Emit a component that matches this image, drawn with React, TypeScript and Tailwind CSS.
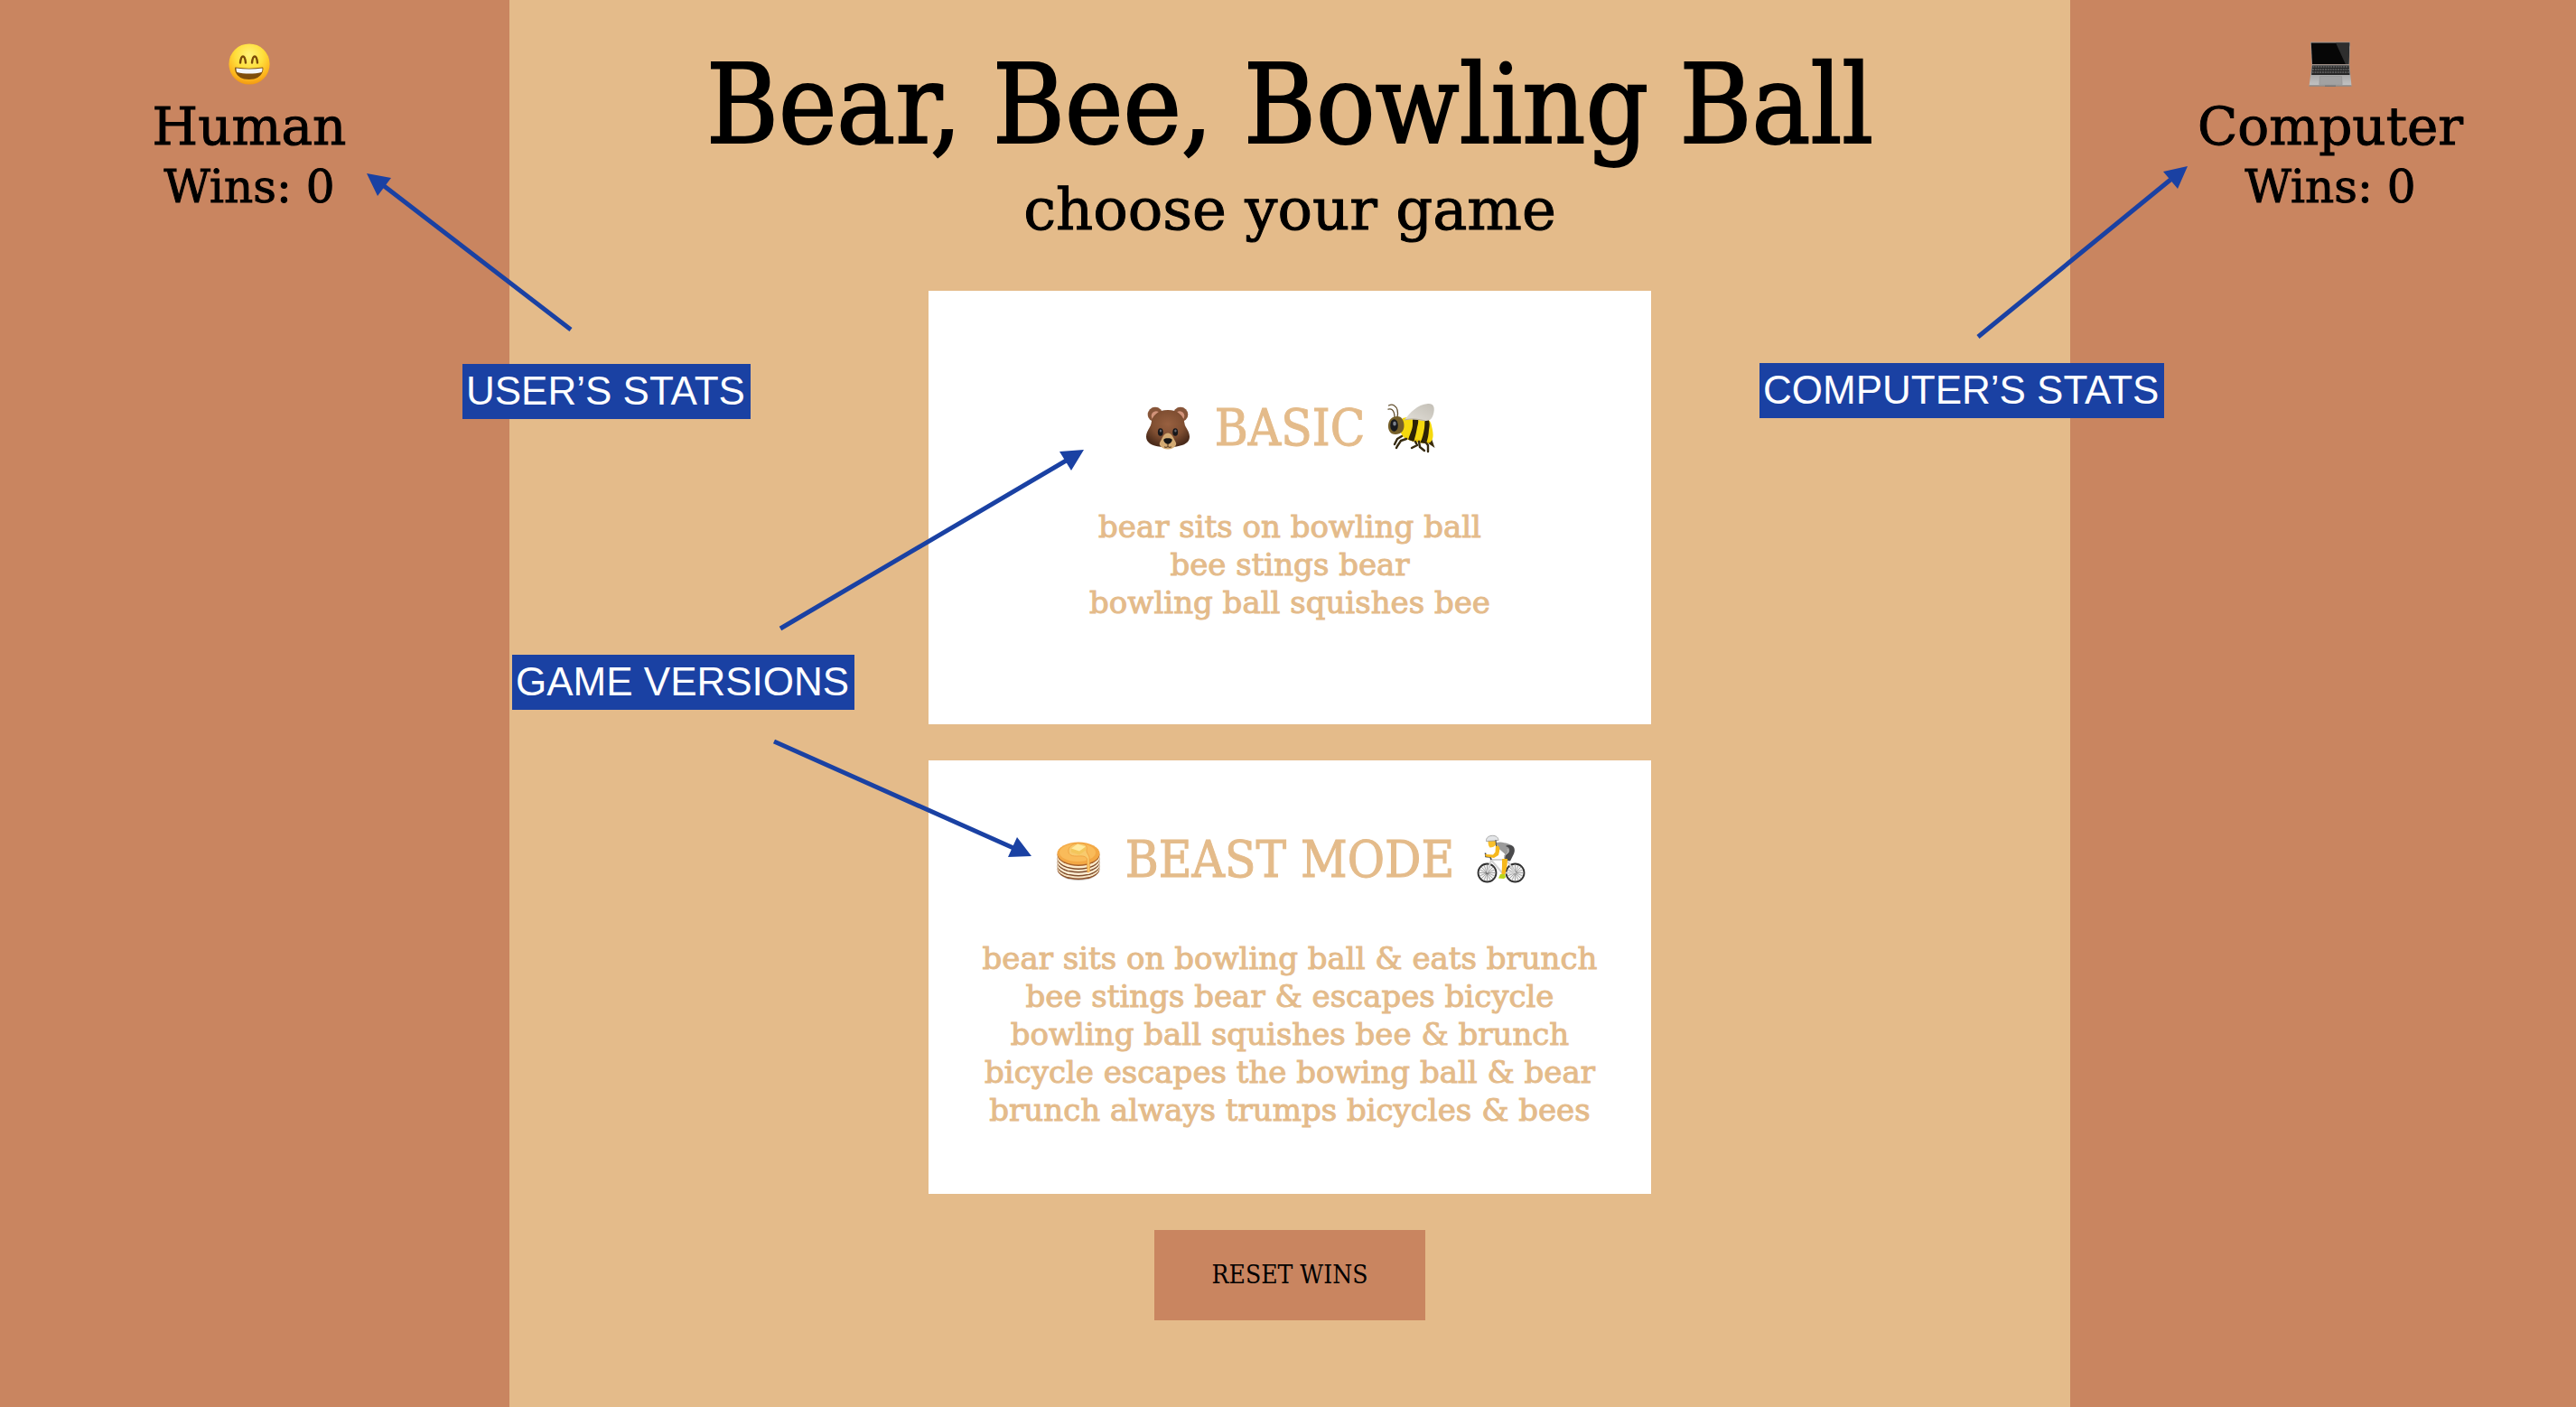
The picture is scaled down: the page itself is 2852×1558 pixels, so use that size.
import type { ReactNode } from "react";

const SLAB = "font-['DejaVu_Serif_Condensed','DejaVu_Serif',serif]";
const SLAB_WIDE = "font-['DejaVu_Serif',serif]";

function Grin() {
  return (
    <svg viewBox="0 0 48 48" className="size-12" aria-label="grinning face" role="img">
      <defs>
        <radialGradient id="face" cx="50%" cy="28%" r="75%">
          <stop offset="0" stopColor="#fff27a" />
          <stop offset=".45" stopColor="#ffdf3c" />
          <stop offset=".8" stopColor="#fdb41d" />
          <stop offset="1" stopColor="#ee9210" />
        </radialGradient>
      </defs>
      <circle cx="24" cy="24" r="22.6" fill="url(#face)" />
      <path d="M14 22.500c.6-5.500 1.800-7 3-7s2.400 1.500 3 7M27 22.500c.6-5.500 1.800-7 3-7s2.400 1.500 3 7" fill="none" stroke="#7a4a08" strokeWidth="2.400" strokeLinecap="round" />
      <path d="M8.500 27.500c10 1.500 20.500 1.500 30.500 0 1 0 1.200 13.500-15.200 13.500S7.500 27.500 8.500 27.500z" fill="#7d4d0c" />
      <path d="M9.500 28.500c9.500 1.400 19.500 1.400 29 0 0 2 0 3.200-1 4.500-8 2-19 2-27 0-.8-1.300-1-2.500-1-4.500z" fill="#f3f6fb" />
    </svg>
  );
}

function Laptop() {
  return (
    <svg viewBox="0 0 48 50" className="h-[50px] w-12" aria-label="laptop" role="img">
      <defs>
        <linearGradient id="deck" x1="0" y1="0" x2="0" y2="1">
          <stop offset="0" stopColor="#8f8f8f" />
          <stop offset="1" stopColor="#c4c4c4" />
        </linearGradient>
      </defs>
      <path d="M2 .5h44l-.8 25H3.500z" fill="#969696" />
      <path d="M2.800 1.500h42.400l-.9 23.500H4z" fill="#060606" />
      <path d="M30 1.500h15.200L44.300 25h-3.500z" fill="#2e2e2e" />
      <path d="M3.500 25.500h41.700L47.500 49.500H.5z" fill="url(#deck)" />
      <path d="M4 26.500h40.700l.8 10.500H3.100z" fill="#262626" />
      <path d="M4.500 28h40M4 31h41M3.700 34h41.800" stroke="#858585" strokeWidth="1.200" strokeDasharray="2 .8" />
      <path d="M12.500 38.500h24l.7 9h-25.400z" fill="#a2a2a2" stroke="#8d8d8d" strokeWidth=".5" />
      <path d="M.5 49h47" stroke="#6f6a66" strokeWidth="1" />
      <path d="M18 48.500h12v1.500H18z" fill="#777" />
    </svg>
  );
}

function Bear() {
  return (
    <svg viewBox="0 0 56 56" className="size-14" aria-label="bear" role="img">
      <defs>
        <radialGradient id="fur" cx="50%" cy="38%" r="62%">
          <stop offset="0" stopColor="#986040" />
          <stop offset=".6" stopColor="#7f4e31" />
          <stop offset="1" stopColor="#4b2b1a" />
        </radialGradient>
      </defs>
      <circle cx="14" cy="13" r="8.300" fill="#875539" />
      <circle cx="42" cy="13" r="8.300" fill="#875539" />
      <circle cx="15" cy="14.500" r="5.300" fill="#d2937a" />
      <circle cx="41" cy="14.500" r="5.300" fill="#d2937a" />
      <path d="M28 8c11 0 17.500 6 18.500 15 .5 4.500 5.500 8 5.500 14.500C52 46 42 49 28 49S4 46 4 37.500C4 31 9 27.500 9.500 23 10.500 14 17 8 28 8z" fill="url(#fur)" />
      <path d="M28 33.500c4 0 5.500 4 7 7 2 3.500 3 5 1.500 7-1.700 2.500-5 4-8.500 4s-6.800-1.500-8.500-4c-1.500-2-.5-3.500 1.500-7 1.500-3 3-7 7-7z" fill="#d3aa72" />
      <path d="M23.500 40.500c1-1.700 8-1.700 9 0 1 2-2.500 5.300-4.500 5.300s-5.500-3.300-4.500-5.300z" fill="#141414" />
      <path d="M28 45v3.500c-1 1-3 1-4 .3M28 48.500c1 1 3 1 4 .3" stroke="#50351d" strokeWidth="1" fill="none" />
      <ellipse cx="19.800" cy="32.500" rx="2.900" ry="4.300" fill="#17171a" />
      <ellipse cx="36.200" cy="32.500" rx="2.900" ry="4.300" fill="#17171a" />
      <ellipse cx="20" cy="31" rx="1.200" ry="1.500" fill="#65666c" />
      <ellipse cx="36.400" cy="31" rx="1.200" ry="1.500" fill="#65666c" />
    </svg>
  );
}

function Bee() {
  return (
    <svg viewBox="0 0 56 56" className="size-14" aria-label="bee" role="img">
      <defs>
        <linearGradient id="wing" x1="1" y1="0" x2="0" y2="1">
          <stop offset="0" stopColor="#c3bfb6" />
          <stop offset="1" stopColor="#e2dfd8" />
        </linearGradient>
        <clipPath id="bee-body">
          <path d="M18 17c5-1.500 12-1.500 20-.5 7 .5 10 2 11.500 7 1 5 2.500 9 2 14-.8 5-3.500 8-8.500 7.500-10-1-18-3-24-7-4-3-6-15-1-21z" />
        </clipPath>
      </defs>
      <path d="M48 34l5.500 16-10-7z" fill="#3a2c0a" />
      <g clipPath="url(#bee-body)">
        <path d="M8 10h46v40H8z" fill="#f5d90e" />
        <path d="M8 36l46 8v8H8z" fill="#d9ae08" opacity=".6" />
        <path d="M30 14c6 1 6 6 4 13-1 6-2 10-4 17l-6-2c1-6 5-12 5-18 .2-4-.5-7 1-10z" fill="#2d2306" />
        <path d="M42 15c7 3 6 9 5 15-.5 6-1 11-4 16l-6-1c3-6 4-11 5-17 .5-5 .5-9 0-13z" fill="#2d2306" />
      </g>
      <path d="M20 19C26 11 34 2 46 1c6-.5 7.500 4 6.500 9-1 6-3 10-9 10-8 0-15-3-23.500-1z" fill="url(#wing)" />
      <path d="M20 19c8-2 15-1 23 1" stroke="#b9b09d" strokeWidth="1" fill="none" />
      <path d="M12 16c1-5 1-10-3.500-13-1.500-1-4-1-6 0M9 16c0-4-1-7-3-8.500-1-.7-2.500-.8-4-.3" stroke="#655232" strokeWidth="1.300" fill="none" strokeLinecap="round" />
      <path d="M12 15c5 0 7.500 5 7.500 10.500S16 35 10 35 1.500 30 2 24.500 6 15 12 15z" fill="#76602a" />
      <ellipse cx="8.500" cy="25" rx="4.300" ry="6.700" fill="#17181c" />
      <ellipse cx="9" cy="23" rx="1.800" ry="2.600" fill="#7c818b" />
      <path d="M17 37l-5 3-3 6M22 40l-6 2-4 6-1 2M32 43l2 4-6 3M36 43l1 6 5 4M42 42l4 5v7" stroke="#352a10" strokeWidth="2.400" fill="none" strokeLinecap="round" strokeLinejoin="round" />
    </svg>
  );
}

function Pancakes() {
  return (
    <svg viewBox="0 0 56 56" className="size-14" aria-label="pancakes" role="img">
      <ellipse cx="28" cy="41.500" rx="21" ry="9.500" fill="#9c8f84" opacity=".55" />
      <ellipse cx="28" cy="38.500" rx="23.500" ry="11.500" fill="#8c512a" />
      <ellipse cx="28" cy="37" rx="23.500" ry="11.500" fill="#f7e6c6" />
      <ellipse cx="28" cy="35" rx="23.500" ry="11.500" fill="#82502e" />
      <ellipse cx="28" cy="33.500" rx="23.500" ry="11.500" fill="#fcedd2" />
      <ellipse cx="28" cy="31" rx="23.500" ry="11.500" fill="#7b4a2a" />
      <ellipse cx="28" cy="29.500" rx="23.500" ry="11.500" fill="#fbebce" />
      <ellipse cx="28" cy="27" rx="23.500" ry="12" fill="#7e4c29" />
      <ellipse cx="28" cy="25.500" rx="23.500" ry="12" fill="#fcebca" />
      <ellipse cx="28" cy="22.500" rx="23.500" ry="12.500" fill="#a9622a" />
      <ellipse cx="28" cy="21" rx="23.500" ry="12.500" fill="#f3a844" />
      <ellipse cx="27" cy="20" rx="20" ry="10" fill="#f9bb5a" />
      <path d="M17 17c1-5 7-7.500 14-7 5 .5 7 3 6 7-.5 3 2 5 3 8l.5 16-2.500 1-.5-15c-2-4-7-3-12-3-6 0-9-2-8.500-7z" fill="#f8ca6d" stroke="#ee9d3b" strokeWidth=".8" />
      <path d="M20 15.500l7-5 9 3v4l-7 5-9-3z" fill="#f3c65b" />
      <path d="M20 15.500l7-5 9 3-7 5z" fill="#ffe99d" />
    </svg>
  );
}

function Cyclist() {
  return (
    <svg viewBox="-2 0 56 56" className="size-14" aria-label="cyclist" role="img">
      {[10.5, 41.5].map((cx) => (
        <g key={cx}>
          <circle cx={cx} cy="42.500" r="10" fill="#f1f1f1" stroke="#303030" strokeWidth="1.800" />
          <path
            d={`M${cx - 9} 42.500h18M${cx} 33.500v18M${cx - 6.5} 36l13 13M${cx + 6.5} 36l-13 13M${cx - 3.5} 34l7 17M${cx + 3.5} 34l-7 17M${cx - 8.5} 39l17 7M${cx + 8.5} 39l-17 7`}
            stroke="#777"
            strokeWidth=".6"
          />
          <circle cx={cx} cy="42.500" r="1.800" fill="#6d6d6d" />
        </g>
      ))}
      <path d="M10.500 42.500L15 28h17l9.500 14.500H27L15.500 29M32 29l-5 13.500" stroke="#d3d3d3" strokeWidth="2" fill="none" />
      <path d="M15 28l-1-3-5-.5-.5-4" stroke="#3f3f3f" strokeWidth="1.600" fill="none" />
      <path d="M20 9l5-.5c6 1 11 1.500 14 5 1.500 3 1 7-1 10l-3 5-6-2 1-5-8-7z" fill="#9b9b9b" />
      <path d="M31 13c3 1 5 3 4 6l-4 4-1 5 6 1.500 4-8c1.500-3 1-7-1-8.500-2-1.500-6-2-8 0z" fill="#4a4a4c" />
      <path d="M33 16l1 4-5 4" stroke="#b8b8b8" strokeWidth="1" fill="none" />
      <path d="M20 12c4 0 5 3 4 7l-1 4-5 3-9-1.500-1-2.500 9 .5 2.500-3z" fill="#f6b81b" />
      <path d="M27 27h6l-.5 8-2 9h-4l.5-9z" fill="#f6b81b" />
      <path d="M25 44h5l1 3.500-2 1.500-6-.5z" fill="#b9d51a" />
      <path d="M11.500 6.500c0 2.500 0 6 2 8 2.500 0 5.500-1 7-4l-1-5z" fill="#f9c02b" />
      <path d="M9.500 6.500c0-3 3-5.200 7-5.200 4 0 6.500 2.200 6.500 5.200l-4 .5-9.500.5z" fill="#e3e5e7" stroke="#8c8c8c" strokeWidth=".7" />
      <path d="M20 6l.5 7" stroke="#444" strokeWidth="1" />
    </svg>
  );
}

function Player({ icon, name, wins, className }: { icon: ReactNode; name: string; wins: number; className: string }) {
  return (
    <aside
      className={`flex flex-col items-center bg-[#c98560] pt-[46px] [-webkit-text-stroke:1px] ${SLAB_WIDE} ${className}`}
    >
      <div className="flex h-[50px] items-center">{icon}</div>
      <h2 className="mt-2.5 text-[58px] leading-[68px]">{name}</h2>
      <p className="text-[50px] leading-[66px]">Wins: {wins}</p>
    </aside>
  );
}

function GameCard({ title, left, right, rules }: { title: string; left: ReactNode; right: ReactNode; rules: string[] }) {
  return (
    <button
      type="button"
      className="flex min-h-[480px] w-full max-w-[800px] flex-col items-center justify-center bg-white text-[#e4bb8a] [-webkit-text-stroke:1px]"
    >
      <span className="mb-[50px] flex h-[76px] items-center gap-6 text-[56px] leading-[76px]">
        {left}
        {title}
        {right}
      </span>
      {rules.map((rule) => (
        <span key={rule} className={`text-[34px] leading-[42px] ${SLAB_WIDE}`}>
          {rule}
        </span>
      ))}
    </button>
  );
}

function Note({ children, className }: { children: ReactNode; className: string }) {
  return (
    <p
      className={`absolute bg-[#1a41a3] pr-1.5 pb-0.5 pl-1 font-['Liberation_Sans',Arial,sans-serif] text-[44px] leading-[59px] whitespace-nowrap text-white ${className}`}
    >
      {children}
    </p>
  );
}

export default function App() {
  return (
    <div className={`relative grid min-h-screen grid-cols-[564fr_1728fr_560fr] bg-[#e4bb8a] text-black ${SLAB}`}>
      <Player icon={<Grin />} name="Human" wins={0} className="pr-3" />

      <main className="flex flex-col items-center pt-[46px] text-center">
        <h1 className="text-[121px] leading-[142px] [-webkit-text-stroke:2px]">Bear, Bee, Bowling Ball</h1>
        <p className={`text-[64px] leading-[88px] [-webkit-text-stroke:1px] ${SLAB_WIDE}`}>choose your game</p>
        <div className="mt-[46px] flex w-full flex-col items-center gap-10">
          <GameCard
            title="BASIC"
            left={<Bear />}
            right={<Bee />}
            rules={["bear sits on bowling ball", "bee stings bear", "bowling ball squishes bee"]}
          />
          <GameCard
            title="BEAST MODE"
            left={<Pancakes />}
            right={<Cyclist />}
            rules={[
              "bear sits on bowling ball & eats brunch",
              "bee stings bear & escapes bicycle",
              "bowling ball squishes bee & brunch",
              "bicycle escapes the bowing ball & bear",
              "brunch always trumps bicycles & bees",
            ]}
          />
          <button type="button" className="h-[100px] w-[300px] bg-[#c98560] text-[28px]">
            RESET WINS
          </button>
        </div>
      </main>

      <Player icon={<Laptop />} name="Computer" wins={0} className="pl-4" />

      <svg viewBox="0 0 2852 1558" className="pointer-events-none absolute top-0 left-0 w-full" aria-hidden="true">
        <g stroke="#1a41a3" strokeWidth="5">
          <path d="M632 365L424 205M2190 373L2403 199M864 696L1182 509M857 821L1122 939" />
        </g>
        <g fill="#1a41a3">
          <path d="M406 192l27 5-15 20zM2422 184l-27 6 16 19zM1200 498l-27 2 13 21zM1142 948l-16-21-10 22z" />
        </g>
      </svg>
      <Note className="top-[403px] left-[512px]">USER’S STATS</Note>
      <Note className="top-[402px] left-[1948px]">COMPUTER’S STATS</Note>
      <Note className="top-[725px] left-[567px]">GAME VERSIONS</Note>
    </div>
  );
}
